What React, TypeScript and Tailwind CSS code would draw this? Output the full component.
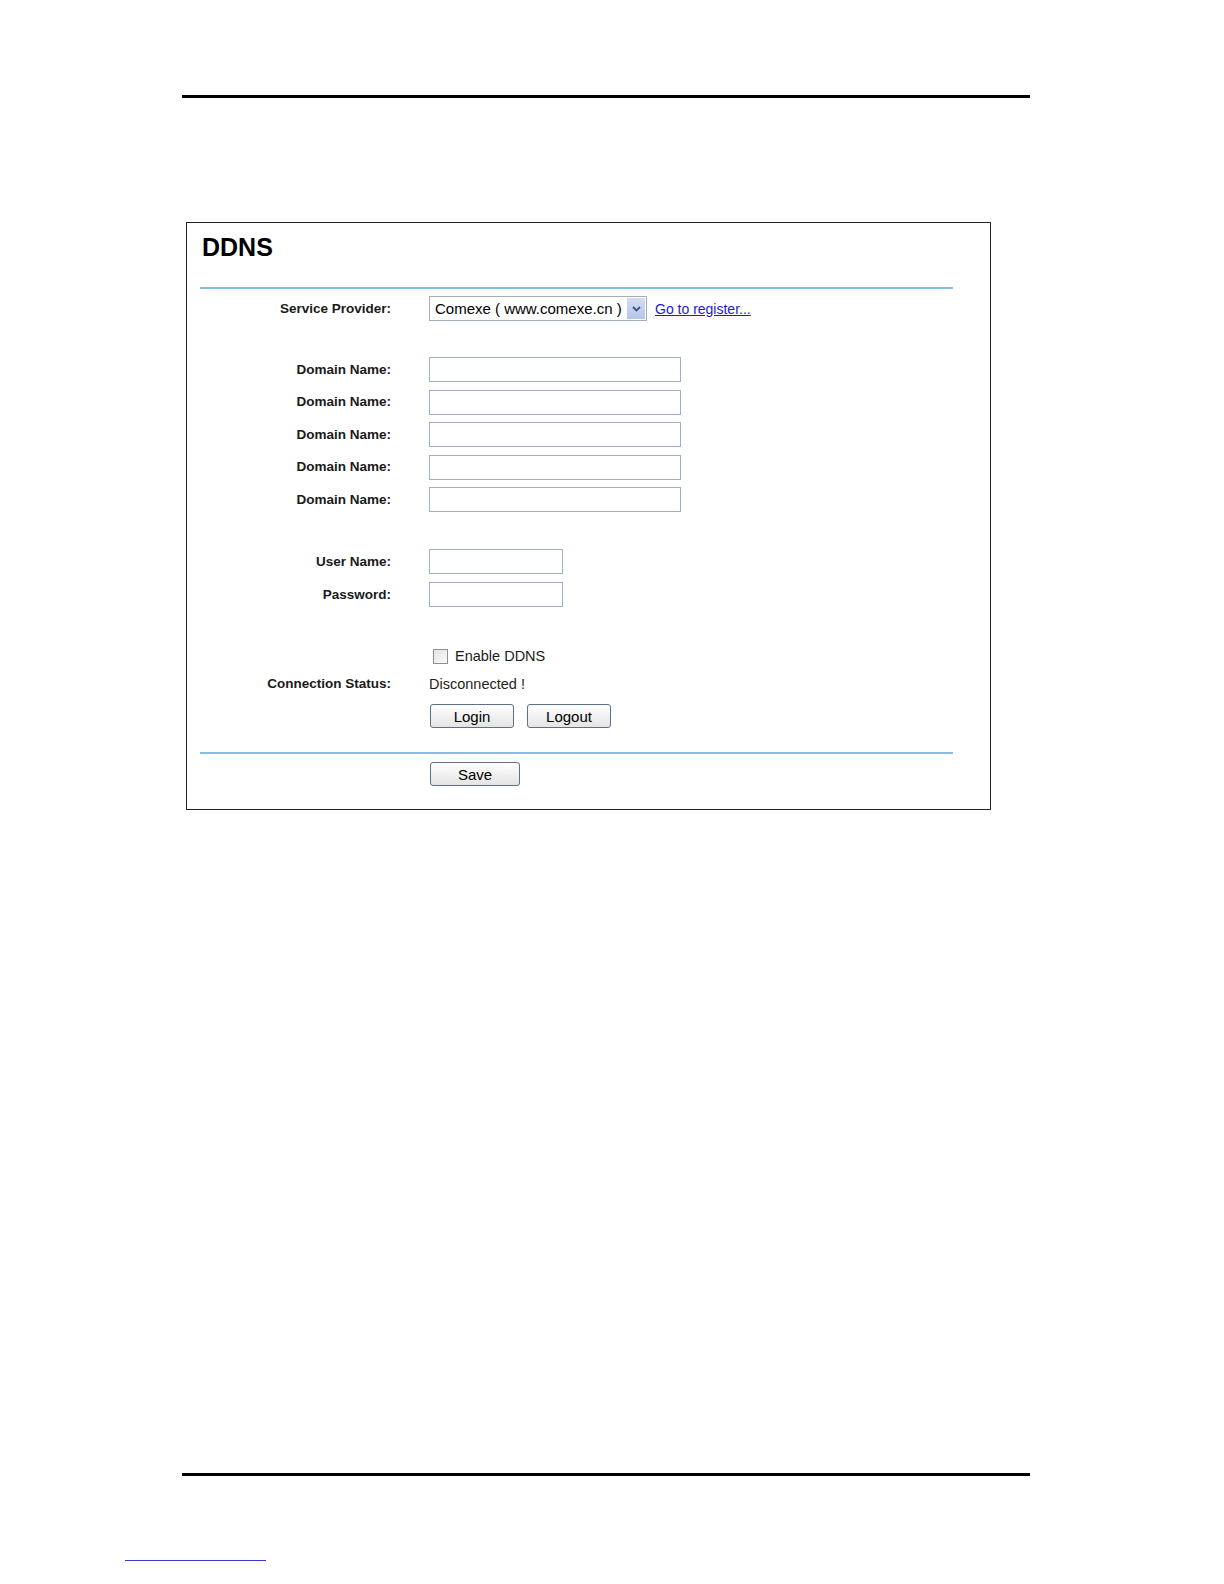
import React from 'react';

const font = { fontFamily: '"Liberation Sans", Arial, sans-serif' };

// 표 행: 오른쪽 정렬된 라벨 + 입력 컨트롤
const Row: React.FC<{ label?: string; className?: string; children: React.ReactNode }> = ({
  label,
  className = '',
  children,
}) => (
  <div className={`flex items-center ${className}`}>
    <div className="w-[204px] shrink-0 text-right text-[13.5px] font-bold text-[#1a1a1a] leading-none">
      {label}
    </div>
    <div className="ml-[38px] flex items-center">{children}</div>
  </div>
);

const TextBox: React.FC<{ w: string }> = ({ w }) => (
  <div className={`${w} h-[25px] border border-[#9fb0c6] bg-white`}></div>
);

const Btn: React.FC<{ w: string; label: string }> = ({ w, label }) => (
  <button
    className={`${w} h-[24px] rounded-[3px] border border-[#5f6f86] bg-gradient-to-b from-white to-[#e4e4e4] text-[15px] leading-none text-black`}
  >
    {label}
  </button>
);

const BlueRule: React.FC<{ className?: string }> = ({ className = '' }) => (
  <div className={`ml-[13px] w-[753px] h-[2px] bg-[#86bde3] ${className}`}></div>
);

const App: React.FC = () => {
  const domains = [0, 1, 2, 3, 4];

  return (
    <div className="w-[1224px] h-[1584px] bg-white overflow-hidden" style={font}>
      {/* 상단 구분선 */}
      <div className="mt-[95px] ml-[182px] w-[848px] h-[3px] bg-black"></div>

      {/* DDNS 패널 */}
      <div className="mt-[124px] ml-[186px] w-[805px] border border-[#222] pb-[22px]">
        <div className="mt-[12px] ml-[15px] text-[25px] font-bold leading-none text-black">DDNS</div>
        <BlueRule className="mt-[27px]" />

        <Row label="Service Provider:" className="mt-[7px]">
          <div className="flex items-center w-[218px] h-[25px] border border-[#a7adb5] bg-white">
            <span className="pl-[5px] text-[15px] leading-none text-black whitespace-nowrap">
              Comexe ( www.comexe.cn )
            </span>
            <div className="ml-auto mr-[1px] w-[18px] h-[21px] bg-gradient-to-b from-[#d3def2] to-[#b3c6ea] flex items-center justify-center">
              <svg width="9" height="6" viewBox="0 0 9 6">
                <path d="M1 1 L4.5 4.5 L8 1" stroke="#3f5478" strokeWidth="1.8" fill="none" />
              </svg>
            </div>
          </div>
          <a className="ml-[8px] text-[14px] leading-none text-[#1b1bd4] underline whitespace-nowrap" href="#">
            Go to register...
          </a>
        </Row>

        <div className="mt-[36px] flex flex-col gap-[7.5px]">
          {domains.map((d) => (
            <Row key={d} label="Domain Name:">
              <TextBox w="w-[252px]" />
            </Row>
          ))}
        </div>

        <div className="mt-[37px] flex flex-col gap-[8px]">
          <Row label="User Name:">
            <TextBox w="w-[134px]" />
          </Row>
          <Row label="Password:">
            <TextBox w="w-[134px]" />
          </Row>
        </div>

        <Row className="mt-[39px] h-[20px]">
          <div className="ml-[4px] w-[15px] h-[15px] border border-[#8d8f93] bg-gradient-to-br from-[#e4e4e4] to-[#fafafa]"></div>
          <span className="ml-[7px] text-[14.5px] leading-none text-[#1a1a1a]">Enable DDNS</span>
        </Row>

        <Row label="Connection Status:" className="mt-[8px] h-[20px]">
          <span className="text-[14.5px] leading-none text-[#2a1a1a]">Disconnected !</span>
        </Row>

        <Row className="mt-[10px]">
          <div className="ml-[1px] flex gap-[13px]">
            <Btn w="w-[84px]" label="Login" />
            <Btn w="w-[84px]" label="Logout" />
          </div>
        </Row>

        <BlueRule className="mt-[24px]" />

        <Row className="mt-[8px]">
          <div className="ml-[1px]">
            <Btn w="w-[90px]" label="Save" />
          </div>
        </Row>
      </div>

      {/* 하단 구분선 */}
      <div className="mt-[663px] ml-[182px] w-[848px] h-[3px] bg-black"></div>
      <div className="mt-[84px] ml-[125px] w-[141px] h-[1px] bg-[#3a3ad0]"></div>
    </div>
  );
};

export default App;
